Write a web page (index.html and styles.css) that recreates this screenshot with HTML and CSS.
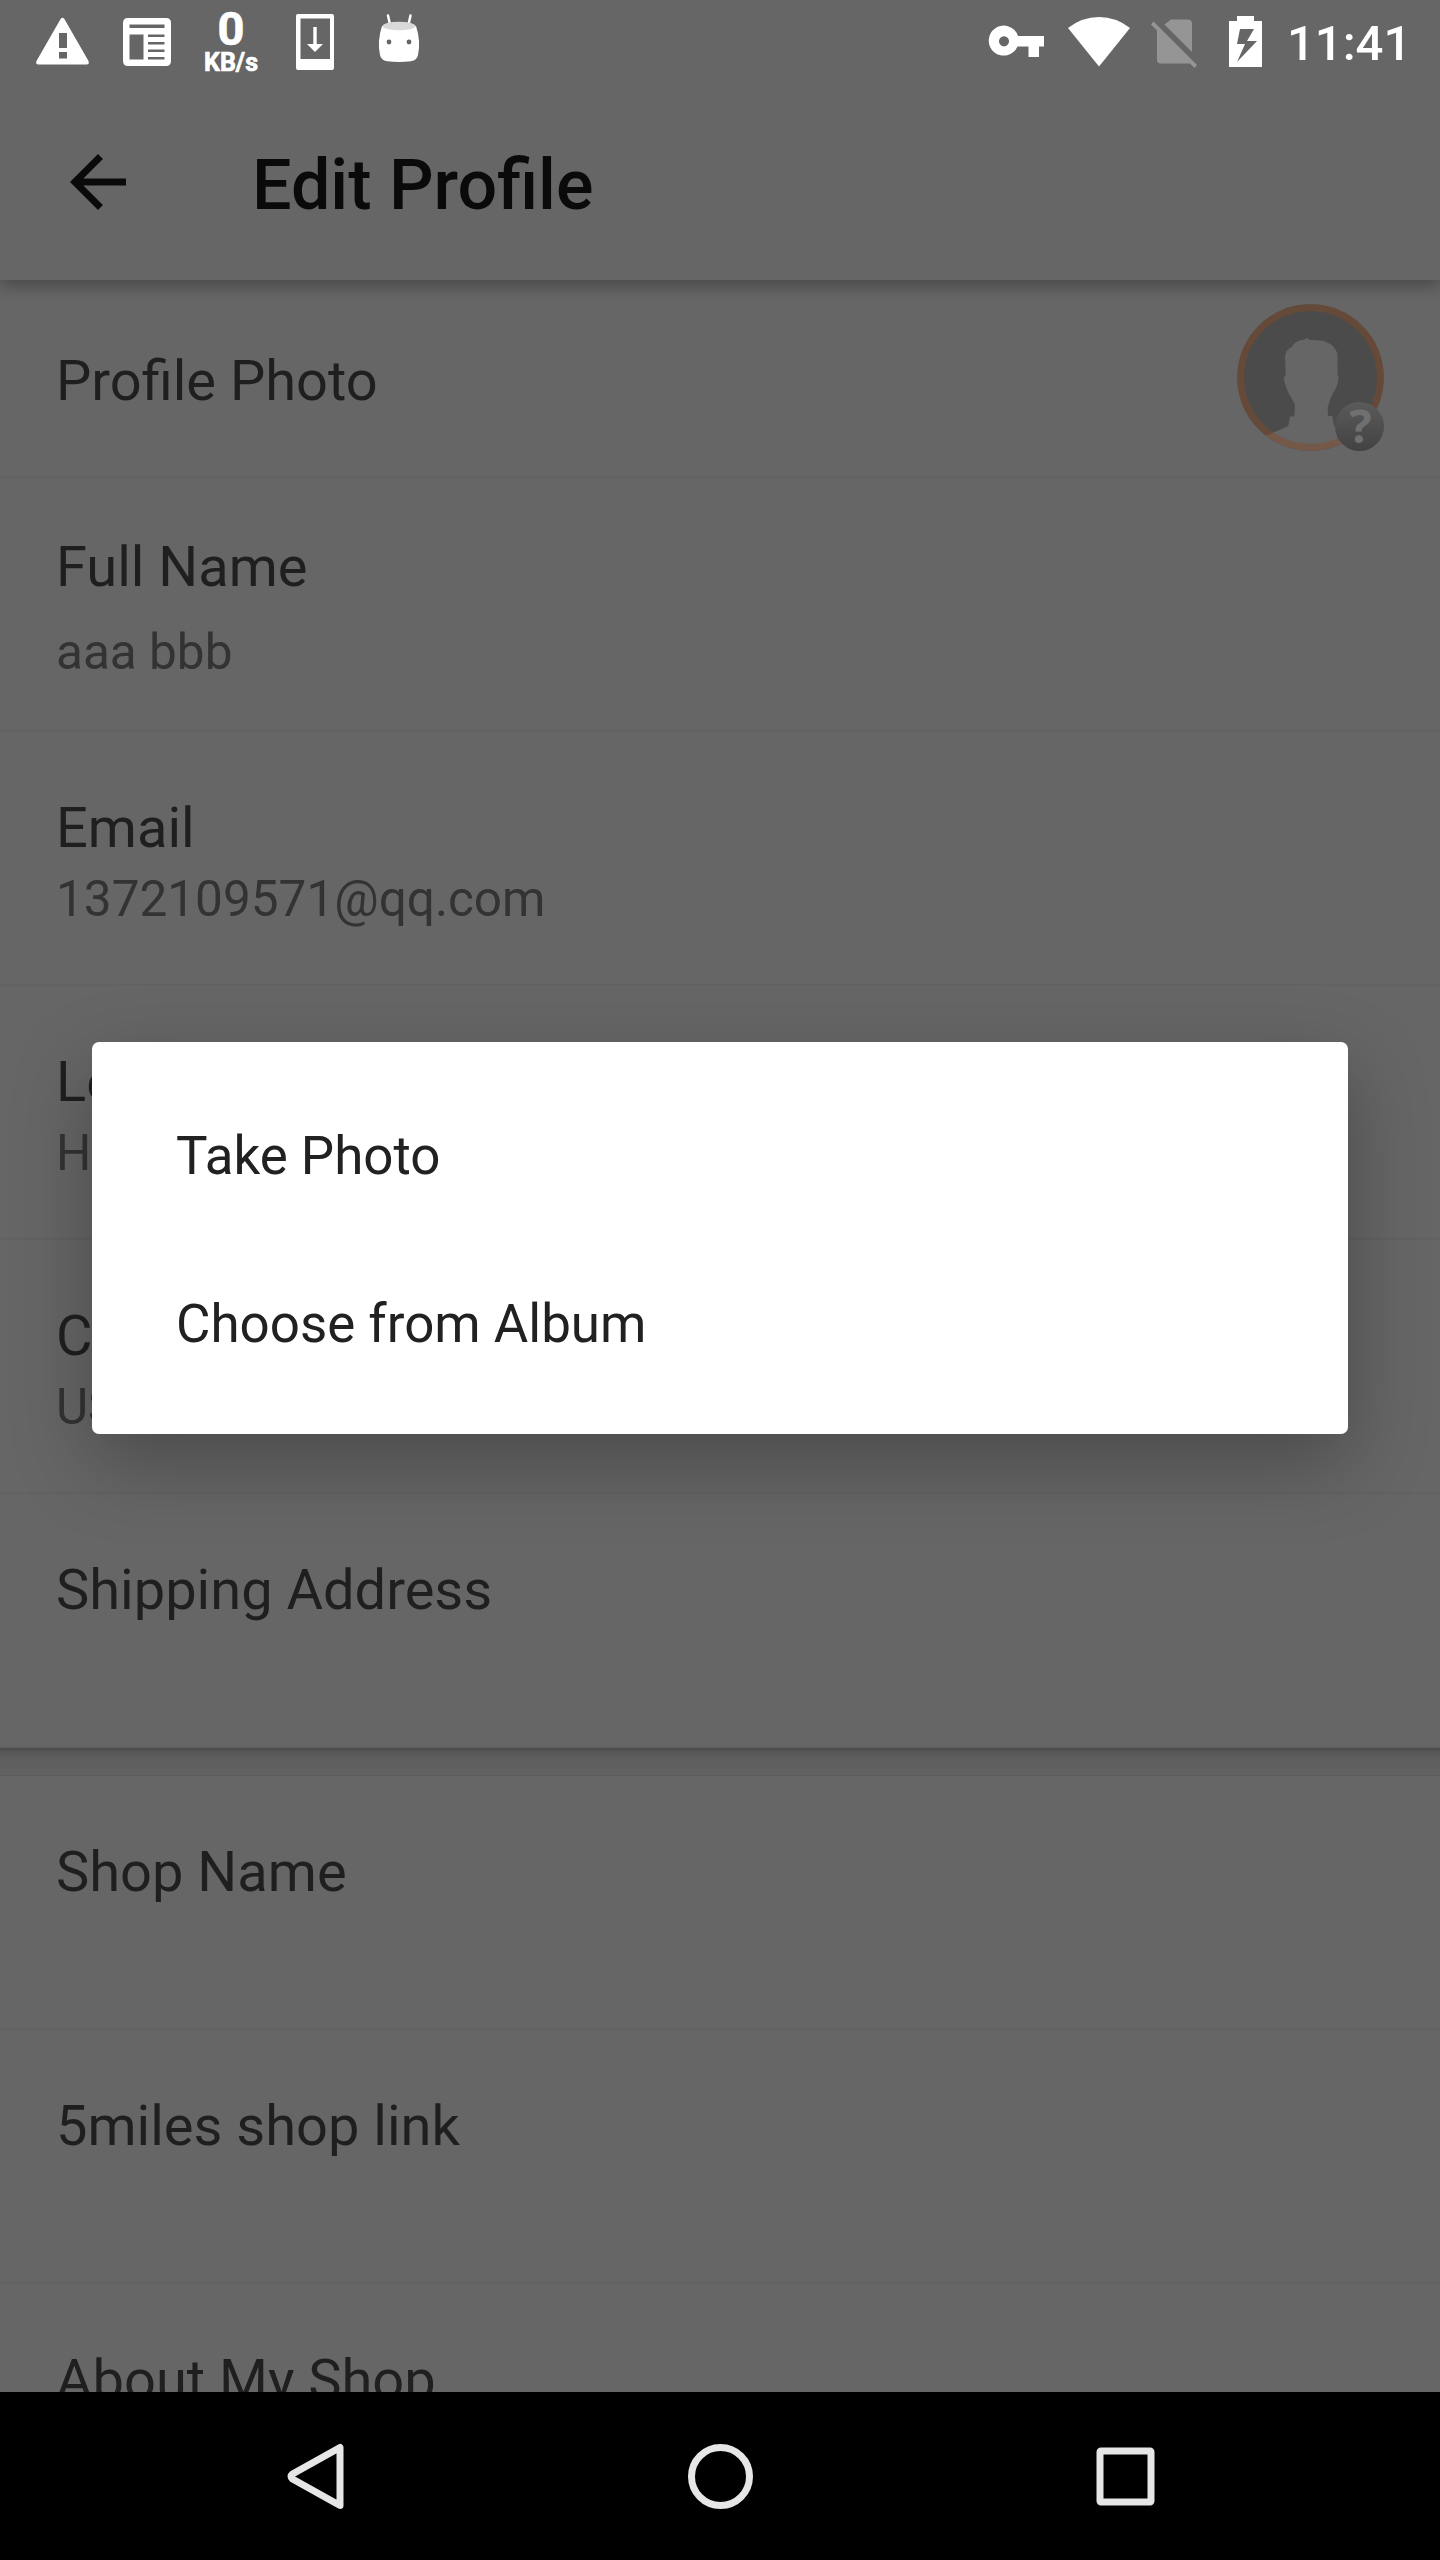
FILE: index.html
```html
<!DOCTYPE html>
<html lang="en">
<head>
<meta charset="utf-8">
<title>Edit Profile</title>
<link rel="stylesheet" href="styles.css">
</head>
<body>
<div class="screen">
  <div class="status-bar">
    <div class="notifications">
      <svg class="cell" viewBox="21 0 84 84"><path fill="#fff" fill-rule="evenodd" d="M60.600 19q1.900-2.400 3.800 0L88.500 61q1.200 3.500-2 3.500H38.500q-3.200 0-2-3.500zM59 33v15h8V33zM59 52v6.500h8V52z"/></svg>
      <svg class="cell" viewBox="105 0 84 84"><path fill="#fff" fill-rule="evenodd" d="M128 18h38q5 0 5 5v38q0 5-5 5h-38q-5 0-5-5V23q0-5 5-5zM129.500 24.500v3.500h35v-3.500zM129.500 34.500v25h14v-25zM148 34.500v2.500h16.500v-2.500zM148 42v2.500h16.500V42zM148 49.500V52h16.500v-2.500zM148 57v2.500h16.500V57z"/></svg>
      <div class="cell net-speed"><span class="net-value">0</span><span class="net-unit">KB/s</span></div>
      <svg class="cell" viewBox="273 0 84 84"><path fill="#fff" fill-rule="evenodd" d="M298 14h34q2 0 2 2v52q0 2-2 2h-34q-2 0-2-2V16q0-2 2-2zM300.500 18.500V59H330V18.500zM313.300 27h3.400v17h6.300L315 52l-8-8h6.300z"/></svg>
      <svg class="cell" viewBox="357 0 84 84"><path d="M388 15.500l2 9M410.500 15.500l-2 9" stroke="#fff" stroke-width="2.500" stroke-linecap="round"/><path fill="#fff" d="M382 26q-5 15-2 29 1 5.500 7 6.300 12 1.500 24 0 6-.8 7-6.300 3-14-2-29z"/><ellipse cx="399" cy="26" rx="16.500" ry="4.300" fill="#d9d9d9"/><circle cx="389" cy="42" r="2.400" fill="#666"/><circle cx="409" cy="42" r="2.400" fill="#666"/></svg>
    </div>
    <div class="system">
      <svg class="wide" viewBox="980 0 80 84"><path fill="#fff" fill-rule="evenodd" d="M1018 36h26v10.500h-5V57h-10.500V46.500h-11A15 15 0 1 1 1018 36zM1004 36.300a5 5 0 1 0 .01 0z"/></svg>
      <svg class="wide" viewBox="1060 0 80 84"><path fill="#fff" d="M1068 28Q1082 17 1099 17t31 11l-31 38.500z"/></svg>
      <svg class="narrow" viewBox="1140 0 70 84"><path fill="#959595" d="M1171 19.500h17q4 0 4 4V52l-27.500-27.500zM1151 24.500l2.500-3L1197 65l-2.500 3-4.500-4.500h-29q-4 0-4-4v-29z"/></svg>
      <svg class="narrow" viewBox="1210 0 70 84"><path fill="#fff" fill-rule="evenodd" d="M1237 16h17v5h8v46h-33V21h8zM1240 29l-3 15h8l-8 18 20-21h-10l7-12z"/></svg>
      <span class="clock">11:41</span>
    </div>
  </div>
  <header class="app-bar">
    <svg class="back" viewBox="0 0 24 24"><path fill="#0a0a0a" d="M20 11H7.830l5.590-5.590L12 4l-8 8 8 8 1.410-1.410L7.830 13H20z"/></svg>
    <h1 class="title">Edit Profile</h1>
  </header>
  <main class="content">
    <div class="row row-photo">
      <span class="label">Profile Photo</span>
      <svg class="avatar" viewBox="0 0 147 147">
        <defs>
          <linearGradient id="badge" x1="0" y1="0" x2="0" y2="1"><stop offset="0" stop-color="#5b5b5b"/><stop offset="1" stop-color="#424242"/></linearGradient>
          <clipPath id="round"><circle cx="73.500" cy="73.500" r="73.300"/></clipPath>
        </defs>
        <circle cx="73.500" cy="73.500" r="73.300" fill="#4b4b4b"/>
        <path clip-path="url(#round)" fill="#666" d="M28 132l19-8q4-1.500 4.700-3.500l1.300-8h4.300l.7-11.500-4.300-8.500Q48 84 46.700 73l2-1L48 52.700q1-7.500 6.700-9.700 3-6.500 12-7.300l3-1.700 3.500 2 6.500.2 6 .5 5.600 2.200q6 2.500 9 10.400l.4 22.400 1 1.300q-.5 7.500-3.700 13-3 4-4.300 8.300l-3 8.400.3 9.300h4.300l1.700 10 20 11v20H28z"/>
        <circle cx="73.500" cy="73.500" r="69.800" fill="none" stroke="#864a26" stroke-opacity=".45" stroke-width="7"/>
        <circle cx="122.500" cy="122.500" r="24.500" fill="url(#badge)"/>
        <text class="badge-mark" x="123.500" y="139" text-anchor="middle">?</text>
      </svg>
    </div>
    <div class="row row-name"><span class="label">Full Name</span><span class="value">aaa bbb</span></div>
    <div class="row"><span class="label">Email</span><span class="value">1372109571@qq.com</span></div>
    <div class="row"><span class="label">Location</span><span class="value">Houston</span></div>
    <div class="row"><span class="label">Currency</span><span class="value">USD</span></div>
    <div class="row"><span class="label">Shipping Address</span></div>
    <div class="section-gap"></div>
    <div class="row"><span class="label">Shop Name</span></div>
    <div class="row"><span class="label">5miles shop link</span></div>
    <div class="row"><span class="label">About My Shop</span></div>
  </main>
  <nav class="nav-bar">
    <svg viewBox="0 0 84 84"><path d="M67 13.500V71.500L19.500 45q-3-2.500 0-5z" fill="none" stroke="#e6e6e6" stroke-width="7" stroke-linejoin="round"/></svg>
    <svg viewBox="0 0 84 84"><circle cx="42.500" cy="42.500" r="29" fill="none" stroke="#e6e6e6" stroke-width="7"/></svg>
    <svg viewBox="0 0 84 84"><rect x="17" y="17" width="51" height="51" rx="1" fill="none" stroke="#e6e6e6" stroke-width="7" stroke-linejoin="round"/></svg>
  </nav>
  <div class="dialog" role="dialog">
    <div class="option">Take Photo</div>
    <div class="option">Choose from Album</div>
  </div>
</div>
</body>
</html>
```
FILE: styles.css
```css
* { box-sizing: border-box; }
body { margin: 0; background: #666; font-family: Roboto, "Liberation Sans", sans-serif; }
svg { display: block; flex: none; }

.screen {
  position: relative;
  display: flex;
  flex-direction: column;
  width: 1440px;
  height: 2560px;
  overflow: hidden;
  background: #666;
}

.status-bar {
  display: flex;
  flex: none;
  justify-content: space-between;
  height: 84px;
  padding-left: 21px;
  color: #fff;
}
.notifications, .system { display: flex; }
.cell { width: 84px; height: 84px; }
.wide { width: 80px; height: 84px; }
.narrow { width: 70px; height: 84px; }
.net-speed {
  display: flex;
  flex-direction: column;
  align-items: center;
  padding-top: 9px;
  font-weight: 700;
  -webkit-text-stroke: .7px #fff;
}
.net-value { font-size: 47px; line-height: 40px; }
.net-unit { font-size: 25px; line-height: 27px; }
.clock {
  width: 160px;
  padding: 2px 0 0 7px;
  font-size: 49px;
  font-weight: 500;
  line-height: 84px;
}

.app-bar {
  position: relative;
  display: flex;
  flex: none;
  align-items: center;
  gap: 112px;
  height: 196px;
  padding-left: 56px;
  box-shadow: 0 7px 14px rgba(0, 0, 0, .26);
  clip-path: inset(0 0 -40px 0);
}
.back { width: 84px; height: 84px; }
.title {
  margin: 0;
  padding-top: 6px;
  color: #0a0a0a;
  font-size: 70px;
  font-weight: 500;
  line-height: 82px;
}

.content { flex: 1; min-height: 0; overflow: hidden; }
.row {
  display: flex;
  flex-direction: column;
  gap: 8px;
  height: 254px;
  padding: 63px 56px 0;
  border-bottom: 2px solid #626262;
}
.row-photo {
  flex-direction: row;
  align-items: center;
  justify-content: space-between;
  height: 198px;
  padding-top: 0;
}
.row-photo .label { padding-top: 5px; }
.row-name { gap: 22px; padding-top: 56px; }
.label { color: #1f1f1f; font-size: 56px; line-height: 66px; }
.value { color: #333; font-size: 49.5px; line-height: 60px; }
.avatar { width: 147px; height: 147px; margin-bottom: 2px; }
.badge-mark { fill: #707070; font: 700 47px "Open Sans", sans-serif; }
.section-gap {
  height: 28px;
  border-bottom: 1px solid #5c5c5c;
  background: linear-gradient(#4b4b4b, #595959 5px, #5f5f5f 12px, #616161);
}

.nav-bar {
  display: flex;
  flex: none;
  align-items: center;
  justify-content: center;
  gap: 321px;
  height: 168px;
  background: #000;
}
.nav-bar svg { width: 84px; height: 84px; }

.dialog {
  position: absolute;
  top: 1042px;
  left: 92px;
  width: 1256px;
  padding: 30px 84px 26px;
  border-radius: 7px;
  background: #fff;
  box-shadow: 0 28px 80px rgba(0, 0, 0, .28);
}
.option { color: #212121; font-size: 52.9px; line-height: 168px; }
```
